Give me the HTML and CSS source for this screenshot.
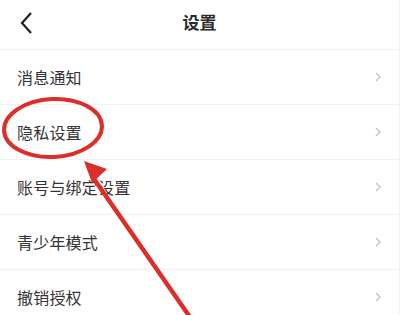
FILE: index.html
```html
<!DOCTYPE html>
<html lang="zh">
<head>
<meta charset="utf-8">
<link rel="stylesheet" href="styles.css">
</head>
<body>
<div class="page">
  <header class="header">
    <svg class="back" width="20" height="26" viewBox="0 0 20 26"><path d="M13 3 L4 13 L13 23" fill="none" stroke="#222" stroke-width="2.2" stroke-linejoin="miter"/></svg>
    <div class="title">设置</div>
  </header>
  <ul class="list">
    <li class="row"><span class="label">消息通知</span><svg class="chev" width="8" height="12" viewBox="0 0 8 12"><path d="M2 2 L6 6 L2 10" fill="none" stroke="#c4c4c4" stroke-width="1.4"/></svg></li>
    <li class="row"><span class="label">隐私设置</span><svg class="chev" width="8" height="12" viewBox="0 0 8 12"><path d="M2 2 L6 6 L2 10" fill="none" stroke="#c4c4c4" stroke-width="1.4"/></svg></li>
    <li class="row"><span class="label">账号与绑定设置</span><svg class="chev" width="8" height="12" viewBox="0 0 8 12"><path d="M2 2 L6 6 L2 10" fill="none" stroke="#c4c4c4" stroke-width="1.4"/></svg></li>
    <li class="row"><span class="label">青少年模式</span><svg class="chev" width="8" height="12" viewBox="0 0 8 12"><path d="M2 2 L6 6 L2 10" fill="none" stroke="#c4c4c4" stroke-width="1.4"/></svg></li>
    <li class="row"><span class="label">撤销授权</span><svg class="chev" width="8" height="12" viewBox="0 0 8 12"><path d="M2 2 L6 6 L2 10" fill="none" stroke="#c4c4c4" stroke-width="1.4"/></svg></li>
  </ul>
  <svg class="annot" width="400" height="315" viewBox="0 0 400 315">
    <ellipse cx="53" cy="128" rx="49" ry="29" fill="none" stroke="#dc2f2a" stroke-width="4" transform="rotate(-3 53 128)"/>
    <line x1="92" y1="176" x2="192" y2="320" stroke="#dc2f2a" stroke-width="4.5"/>
    <polygon points="84,161 107,169 92,183" fill="#dc2f2a"/>
  </svg>
</div>
</body>
</html>
```
FILE: styles.css
```css
* { box-sizing: border-box; }
html, body { margin: 0; padding: 0; background: #fff; }
body {
  font-family: "Noto Sans CJK SC", "Noto Sans", sans-serif;
  color: #333;
  overflow: hidden;
}
.page {
  position: relative;
  width: 400px;
  height: 315px;
  overflow: hidden;
  border-right: 1px solid #f0f0f0;
}
.header {
  position: relative;
  height: 50px;
  display: flex;
  align-items: center;
  justify-content: center;
  border-bottom: 1px solid #f2f2f2;
}
.back {
  position: absolute;
  left: 18px;
  top: 10px;
}
.title {
  font-size: 17px;
  font-weight: 700;
  color: #2b2b2b;
  margin-top: -6px;
}
.list {
  list-style: none;
  margin: 0;
  padding: 0;
}
.row {
  height: 55px;
  display: flex;
  align-items: center;
  justify-content: space-between;
  padding: 0 17px 0 17px;
  border-bottom: 1px solid #f2f2f2;
}
.label {
  font-size: 16px;
  color: #333;
  letter-spacing: 0.2px;
}
.chev { margin-right: 0; }
.annot {
  position: absolute;
  left: 0;
  top: 0;
  pointer-events: none;
}
```
